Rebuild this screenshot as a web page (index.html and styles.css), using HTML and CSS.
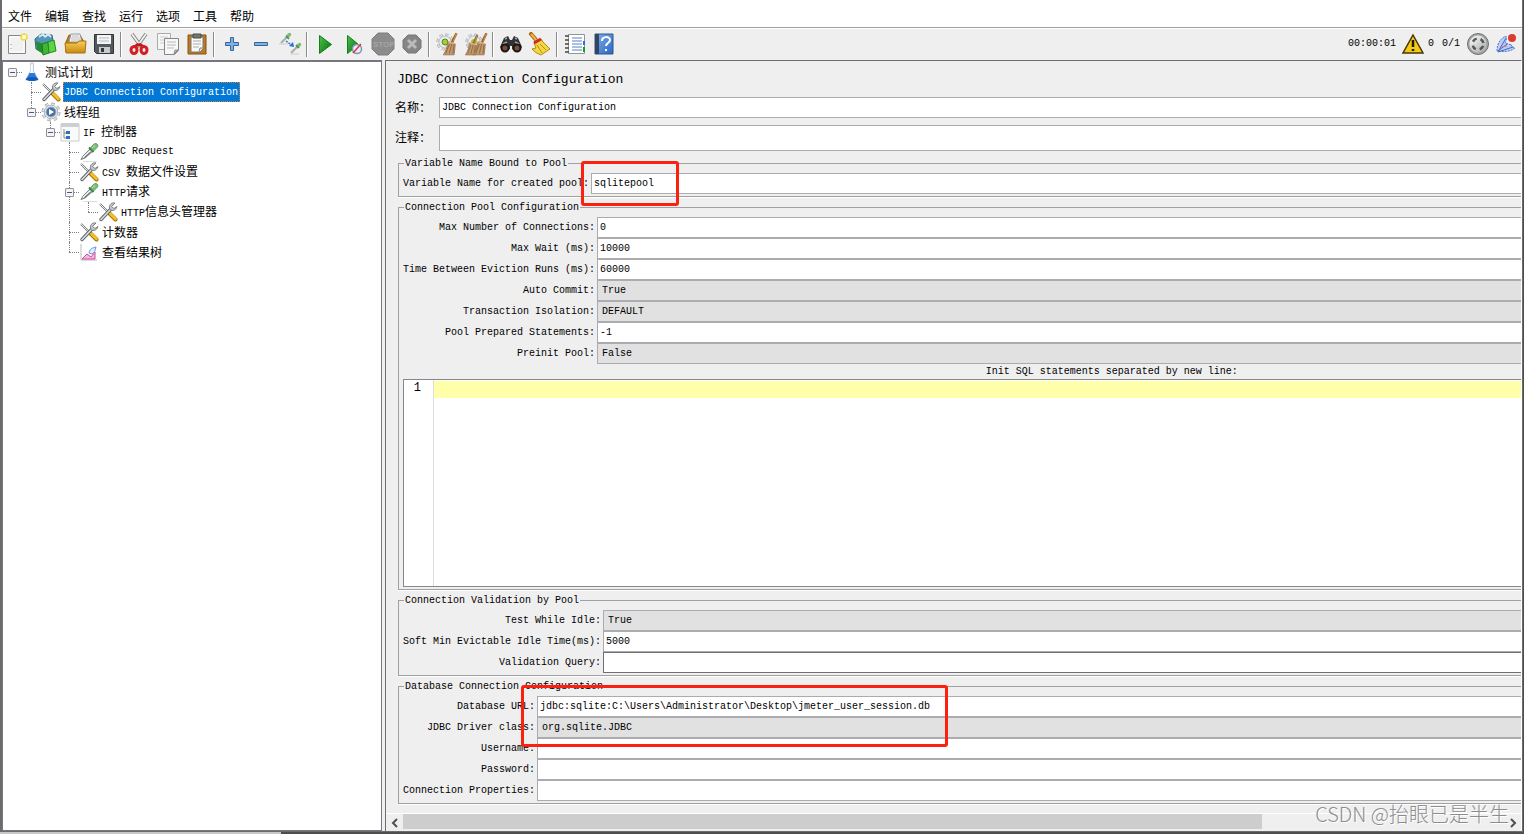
FILE: index.html
```html
<!DOCTYPE html>
<html lang="zh-CN">
<head>
<meta charset="utf-8">
<title>JDBC Connection Configuration</title>
<link rel="stylesheet" href="styles.css">
</head>
<body>
<svg class="defs" aria-hidden="true">
  <defs>
    <linearGradient id="gold" x1="0" y1="0" x2="0" y2="1"><stop offset="0" stop-color="#f7cf55"/><stop offset="1" stop-color="#c98a14"/></linearGradient>
    <linearGradient id="green" x1="0" y1="0" x2="1" y2="1"><stop offset="0" stop-color="#4fc04f"/><stop offset="1" stop-color="#067006"/></linearGradient>
    <linearGradient id="silver" x1="0" y1="0" x2="1" y2="1"><stop offset="0" stop-color="#ffffff"/><stop offset="1" stop-color="#a2a6a8"/></linearGradient>
    <linearGradient id="blue" x1="0" y1="0" x2="1" y2="1"><stop offset="0" stop-color="#7fb0ee"/><stop offset="1" stop-color="#2c66bd"/></linearGradient>
    <symbol id="tools" viewBox="0 0 20 20">
      <path d="M2 2 12 12" stroke="#6d7173" stroke-width="2"/><path d="M2 2 11 11" stroke="#e9ecec" stroke-width="1"/>
      <path d="M11.500 11.500 17.500 17.500" stroke="#a87500" stroke-width="4" stroke-linecap="round"/><path d="M12 11.500 17.500 17" stroke="#f5c02a" stroke-width="2.500" stroke-linecap="round"/>
      <path d="M3 17.500 13 7" stroke="#5d6163" stroke-width="3.400" stroke-linecap="round"/><path d="M3 17.500 13 7" stroke="#d9dddd" stroke-width="1.700" stroke-linecap="round"/>
      <path d="M17 1C13 0 10 4 12 7.500c2 2 6 1 7-3l-3 2-2.500-2Z" fill="#c3c7c8" stroke="#686c6e" stroke-width=".8"/>
    </symbol>
    <symbol id="dropper" viewBox="0 0 20 20">
      <path d="M2 17.500 4 14l7-7 2.500 2.500L6 16Z" fill="#c4cacb" stroke="#6b7173" stroke-width=".9"/><path d="m4 15.500 7.500-7" stroke="#f5f8f8" stroke-width="1.200"/><path d="m5.500 15.500 6-5.500" stroke="#4b5153" stroke-width=".9"/>
      <path d="m10 5.500 4.500 4.500" stroke="#3b7d46" stroke-width="2"/><path d="m11.500 6 3-3.500c2.500-2.500 6 .5 3.500 3L14.500 9Z" fill="#7fc077" stroke="#4a9150" stroke-width=".9"/><path d="m13.500 5.500 2.500-2" stroke="#c3e6bd"/>
      <path d="M4 19.500h14" stroke="#ddd"/>
    </symbol>
    <symbol id="cog" viewBox="0 0 20 20">
      <circle cx="10" cy="10" r="8" fill="none" stroke="#989da1" stroke-width="3" stroke-dasharray="3.400 2.880"/>
      <circle cx="10" cy="10" r="8" fill="none" stroke="#e3e6e8" stroke-width="1.600" stroke-dasharray="2.800 3.480" stroke-dashoffset="-.3"/>
      <circle cx="10" cy="10" r="6.800" fill="#e8ebed" stroke="#b4b9bc"/>
    </symbol>
    <symbol id="brush" viewBox="0 0 14 20">
      <path d="M12 1 8 9" stroke="#9a6328" stroke-width="2"/><path d="m5 8 6 2-1 9H1C4 15 4 11 5 8Z" fill="#c39a6e" stroke="#9b7148" stroke-width=".7"/><path d="M6 10 3 18M8 10 6 18M10 10 9 18" stroke="#8e6642" stroke-width=".8"/><path d="m5 8 6 2" stroke="#e1bd8c"/><path d="M12 1 9 9" stroke="#c18a4d" stroke-width="1"/>
    </symbol>
  </defs>
</svg>
<div class="window">
  <nav class="menubar">
    <button>文件</button><button>编辑</button><button>查找</button><button>运行</button><button>选项</button><button>工具</button><button>帮助</button>
  </nav>
  <div class="toolbar">
    <button aria-label="New"><svg viewBox="0 0 24 24"><path d="M3.500 3.500h17v18h-17Z" fill="#f0f1f0" stroke="#858885"/><path d="M5 5h14v15H5Z" fill="none" stroke="#fff"/><circle cx="19" cy="5" r="3" fill="#fffbd0" stroke="#ead94c" stroke-width="1.500"/><path d="M6 12v1M6 16v1" stroke="#999"/></svg></button>
    <button aria-label="Templates"><svg viewBox="0 0 24 24"><path d="m1 7 6-5 11 1 2 12-12 5-6-3Z" fill="#5297ba" stroke="#28688b"/><path d="m5 5 4-3 2 3M11 5l3-3 3 3" fill="none" stroke="#d5e8ef" stroke-width="2"/><path d="m2 9 7 3v10l-6-4Z" fill="#238e2b"/><path d="m8 12 6-2 1 11-6 2Z" fill="#42b633" stroke="#187d1c"/><path d="m14 10 6-2 2 11-7 2Z" fill="#5ed343" stroke="#238a20"/></svg></button>
    <button aria-label="Open"><svg viewBox="0 0 24 24"><path d="M3 10 6 3h11l4 7v10H3Z" fill="#bc7d17" stroke="#93600f"/><path d="m6 10 2-8h9l2 8Z" fill="#fafafa" stroke="#999"/><path d="M9 4h7M8 6h9M8 8h10" stroke="#bbb"/><path d="M2 11h12l2-2h7l-1 12H3Z" fill="url(#gold)" stroke="#a97110"/></svg></button>
    <button aria-label="Save"><svg viewBox="0 0 24 24"><path d="M2.500 2.500h19v19h-17l-2-2Z" fill="#535a5d" stroke="#303538"/><path d="M5 3h14v9H5Z" fill="#f2f4f5"/><path d="M7 6h10M7 9h10" stroke="#b7bcc0"/><path d="M7 15h11v6H7Z" fill="#c6cacc"/><path d="M9 16h3v4H9Z" fill="#34383a"/></svg></button>
    <span class="separator"></span>
    <button aria-label="Cut"><svg viewBox="0 0 24 24"><path d="M5 2 15 16M19 2 9 16" stroke="#777" stroke-width="3.500"/><path d="M5 2 15 16M19 2 9 16" stroke="#eee" stroke-width="2"/><path d="m12 12-5 3M12 12l5 3" stroke="#bd1616" stroke-width="3"/><ellipse cx="7" cy="18" rx="3" ry="3.500" fill="none" stroke="#d31d23" stroke-width="3"/><ellipse cx="17" cy="18" rx="3" ry="3.500" fill="none" stroke="#d31d23" stroke-width="3"/></svg></button>
    <button aria-label="Copy"><svg viewBox="0 0 24 24"><path d="M1.500 1.500h13v16h-13Z" fill="#f6f6f6" stroke="#aaa"/><path d="M4 5h8M4 8h8M4 11h8" stroke="#ccc"/><path d="M8.500 6.500h14v12l-4 4h-10Z" fill="#f8f8f8" stroke="#858585"/><path d="M11 10h9M11 13h9M11 16h7" stroke="#b7b7b7"/><path d="m18 22 1-4h3Z" fill="#ccc" stroke="#888"/></svg></button>
    <button aria-label="Paste"><svg viewBox="0 0 24 24"><path d="M3 3h18v19H3Z" fill="#bd7a20" stroke="#875211"/><path d="M6 5h12v12l-3 3H6Z" fill="#fafafa" stroke="#777"/><path d="M8 2h8v4H8Z" fill="#73786f" stroke="#4b4e49"/><path d="M8 9h8M8 12h8M8 15h6" stroke="#aaa"/><path d="m14 20 1-4h3" fill="#ddd" stroke="#888"/></svg></button>
    <span class="separator"></span>
    <button aria-label="Expand"><svg viewBox="0 0 24 24"><path d="M10.500 5.500h3v5h5v3h-5v5h-3v-5h-5v-3h5Z" fill="#82b0df" stroke="#3566a2"/></svg></button>
    <button aria-label="Collapse"><svg viewBox="0 0 24 24"><path d="M5.500 10.500h13v3h-13Z" fill="#82b0df" stroke="#3566a2"/></svg></button>
    <button aria-label="Toggle"><svg viewBox="0 0 24 24"><path d="m3 11 6-6M13 21l6-6" stroke="#a9afab" stroke-width="2"/><path d="m9.500 4.500 2-2M19.500 14.500l2-2" stroke="#7fb97a" stroke-width="3.500" stroke-linecap="round"/><path d="m8 4 3 3M18 13l3 3" stroke="#4d8a52" stroke-width="1.500"/><path d="m8 9 7 5" stroke="#3872d0" stroke-width="1.500" stroke-dasharray="2 1"/><path d="m15 10 1 5-5-1Z" fill="#246dde"/><path d="M1 12h9M13 22h8" stroke="#ccc"/></svg></button>
    <span class="separator"></span>
    <button aria-label="Start"><svg viewBox="0 0 24 24"><path d="M6.500 3.500v18l12-9Z" fill="url(#green)" stroke="#118019"/></svg></button>
    <button aria-label="Start no pauses"><svg viewBox="0 0 24 24"><path d="M5.500 3.500v18l11-9Z" fill="url(#green)" stroke="#118019"/><circle cx="15" cy="17" r="4.500" fill="#e8edf5" stroke="#7896ba" stroke-width="1.500"/><path d="m11 21 8-9" stroke="#df3434" stroke-width="1.500"/></svg></button>
    <button aria-label="Stop"><svg viewBox="0 0 24 24"><path d="M7 1h10l6 6v10l-6 6H7l-6-6V7Z" fill="#8c8c8c" stroke="#7f7f7f"/><text x="2" y="15" class="stop-text">STOP</text></svg></button>
    <button aria-label="Shutdown"><svg viewBox="0 0 24 24"><path d="M8 3h8l5 5v8l-5 5H8l-5-5V8Z" fill="#858585" stroke="#777"/><path d="m8 8 8 8M16 8l-8 8" stroke="#bbb" stroke-width="3"/></svg></button>
    <span class="separator"></span>
    <button aria-label="Clear"><svg viewBox="0 0 24 24"><use href="#cog" x="1" y="1" width="18" height="18"/><circle cx="10" cy="10" r="3" fill="#9ccf35" stroke="#5b8d1d"/><use href="#brush" x="7" y="0" width="17" height="24"/></svg></button>
    <button aria-label="Clear all"><svg viewBox="0 0 24 24"><use href="#cog" x="1" y="1" width="18" height="18"/><circle cx="10" cy="10" r="3" fill="#9ccf35"/><use href="#brush" x="0" y="2" width="16" height="22"/><use href="#brush" x="8" y="0" width="17" height="24"/></svg></button>
    <span class="separator"></span>
    <button aria-label="Search"><svg viewBox="0 0 24 24"><path d="m5 6 4-2 2 4h2l2-4 4 2 4 9-4 5-6-3v-3h-2v3l-6 3-4-5Z" fill="#303234"/><path d="m6 7 2-1M16 6l2 1M4 12l4-2M16 10l4 2" stroke="#a3a5a8" stroke-width="1.500"/><circle cx="6" cy="16" r="3.500" fill="#814a2d" stroke="#171717" stroke-width="2"/><circle cx="18" cy="16" r="3.500" fill="#814a2d" stroke="#171717" stroke-width="2"/></svg></button>
    <button aria-label="Reset search"><svg viewBox="0 0 24 24"><path d="m3 2 6 7" stroke="#a86509" stroke-width="4" stroke-linecap="round"/><path d="m3 2 6 7" stroke="#efb548" stroke-width="2"/><path d="m6 11 7-4 2 3 7 7-9 6Q7 21 4 17l4-1Z" fill="#f3d643" stroke="#b48b0c"/><path d="m6 11 7-4" stroke="#d42a21" stroke-width="3"/><path d="m9 13 5 8M12 12l6 6" stroke="#b89110"/></svg></button>
    <span class="separator"></span>
    <button aria-label="Function helper"><svg viewBox="0 0 24 24"><path d="M5.500 2.500h16v19h-16Z" fill="#fff" stroke="#91969b"/><path d="M9 6h10M9 9h10M9 12h10M9 15h10M9 18h10" stroke="#5a7fc4"/><path d="M2 4h4M2 8h4M2 12h4M2 16h4M2 20h4" stroke="#444" stroke-width="1.500"/><path d="M20 9h2v4h-2Z" fill="#2471d8"/><path d="M20 15h2v5h-2Z" fill="#16992f"/></svg></button>
    <button aria-label="Help"><svg viewBox="0 0 24 24"><path d="M3 2h18v20H3Z" fill="url(#blue)" stroke="#2c5694"/><path d="M3 2h4v20H3Z" fill="#33475c"/><path d="M10 9c0-5 8-5 8-1 0 3-4 3-4 6M14 17v2" fill="none" stroke="#fff" stroke-width="2"/></svg></button>
    <div class="status">
      <span class="clock">00:00:01</span>
      <button aria-label="Warnings"><svg viewBox="0 0 24 24"><path d="M12 3 22 21H2Z" fill="#f4c911" stroke="#43370b" stroke-width="1.500"/><path d="M12 8v7M12 17v2" stroke="#211b05" stroke-width="2.500"/></svg></button>
      <span>0</span><span class="threads">0/1</span>
      <svg class="target" viewBox="0 0 24 24"><circle cx="12" cy="12" r="10.500" fill="#a6a6a6" stroke="#707070"/><circle cx="12" cy="12" r="8.500" fill="url(#silver)"/><circle cx="12" cy="12" r="5.500" fill="none" stroke="#555" stroke-width="2.500" stroke-dasharray="4.600 4.040" stroke-dashoffset="-2"/></svg>
      <svg class="plume" viewBox="0 0 24 24"><path d="M3 19C3 11 7 6 12 4c1 3 0 5-1 7l7 2-1 1 4 2c-5 4-12 4-18 3Z" fill="#b9cdf7" stroke="#5379cf" stroke-dasharray="2 1"/><path d="M4 20 12 6M4 20l15-5M4 19l9-7" stroke="#456bbb"/><path d="m7 15 6-1" stroke="#d76d95"/><circle cx="18" cy="6" r="4" fill="#dc3b31"/></svg>
    </div>
  </div>
  <div class="workspace">
    <aside class="tree">
      <ul class="root">
        <li>
          <div class="node"><button class="expander" aria-label="Collapse"></button><svg viewBox="0 0 20 20"><path d="M8.500 1h3v8l5 9h-13l5-9Z" fill="#edf4fa" stroke="#c0ccd5"/><path d="M7.500 11h5l3.500 7H4Z" fill="#267bdf"/><ellipse cx="10" cy="17" rx="6" ry="2" fill="#1359b9"/><path d="M9.500 3v8" stroke="#fff" stroke-width="1.500"/></svg><span>测试计划</span></div>
          <ul>
            <li><div class="node leaf"><svg><use href="#tools"/></svg><span class="selected latin">JDBC Connection Configuration</span></div></li>
            <li>
              <div class="node"><button class="expander" aria-label="Collapse"></button><svg viewBox="0 0 20 20"><use href="#cog"/><circle cx="10" cy="10" r="5" fill="#4872a8" stroke="#9cb1cd"/><path d="m8 7 5 3-5 3Z" fill="#fff"/></svg><span>线程组</span></div>
              <ul>
                <li>
                  <div class="node"><button class="expander" aria-label="Collapse"></button><svg viewBox="0 0 20 20"><path d="M1 2h18v17H1Z" fill="#fafafa" stroke="#ccc"/><path d="M1 1h18v4H1Z" fill="#ccd0d3"/><path d="M4 7v9h3M4 11h3" fill="none" stroke="#888"/><path d="M6 9h4v3H6ZM6 14h4v3H6Z" fill="#2774c7"/></svg><span><span class="latin">IF </span>控制器</span></div>
                  <ul>
                    <li><div class="node leaf"><svg><use href="#dropper"/></svg><span class="latin">JDBC Request</span></div></li>
                    <li><div class="node leaf"><svg><use href="#tools"/></svg><span><span class="latin">CSV </span>数据文件设置</span></div></li>
                    <li>
                      <div class="node"><button class="expander" aria-label="Collapse"></button><svg><use href="#dropper"/></svg><span><span class="latin">HTTP</span>请求</span></div>
                      <ul><li><div class="node leaf"><svg><use href="#tools"/></svg><span><span class="latin">HTTP</span>信息头管理器</span></div></li></ul>
                    </li>
                    <li><div class="node leaf"><svg><use href="#tools"/></svg><span>计数器</span></div></li>
                    <li><div class="node leaf"><svg viewBox="0 0 20 20"><path d="M2 2v16h16" fill="none" stroke="#bbb"/><path d="m3 17 5-5 4 3 4-5v7Z" fill="#f5b5dc" stroke="#cf4c9b"/><path d="M10 11c1-5 4-5 7-6-1 3-1 6-4 7Z" fill="#e3edff" stroke="#6d92dc"/></svg><span>查看结果树</span></div></li>
                  </ul>
                </li>
              </ul>
            </li>
          </ul>
        </li>
      </ul>
    </aside>
    <main class="editor-pane">
      <div class="scroll-view">
        <form class="form">
          <h1>JDBC Connection Configuration</h1>
          <div class="meta"><label for="name">名称：</label><input id="name" value="JDBC Connection Configuration"></div>
          <div class="meta comment"><label for="comment">注释：</label><input id="comment"></div>

          <fieldset>
            <legend>Variable Name Bound to Pool</legend>
            <div class="fields">
              <label for="pool">Variable Name for created pool:</label><input id="pool" value="sqlitepool">
            </div>
            <span class="mark mark-pool"></span>
          </fieldset>

          <fieldset>
            <legend>Connection Pool Configuration</legend>
            <div class="fields">
              <label for="max">Max Number of Connections:</label><input id="max" value="0">
              <label for="wait">Max Wait (ms):</label><input id="wait" value="10000">
              <label for="evict">Time Between Eviction Runs (ms):</label><input id="evict" value="60000">
              <label for="auto">Auto Commit:</label><select id="auto"><option>True</option></select>
              <label for="iso">Transaction Isolation:</label><select id="iso"><option>DEFAULT</option></select>
              <label for="prep">Pool Prepared Statements:</label><input id="prep" value="-1">
              <label for="preinit">Preinit Pool:</label><select id="preinit"><option>False</option></select>
            </div>
            <label class="sql-label" for="sql">Init SQL statements separated by new line:</label>
            <div class="code"><span class="gutter">1</span><textarea id="sql" spellcheck="false"></textarea></div>
          </fieldset>

          <fieldset>
            <legend>Connection Validation by Pool</legend>
            <div class="fields">
              <label for="idle">Test While Idle:</label><select id="idle"><option>True</option></select>
              <label for="soft">Soft Min Evictable Idle Time(ms):</label><input id="soft" value="5000">
              <label for="query">Validation Query:</label><input id="query" class="dark">
            </div>
          </fieldset>

          <fieldset>
            <legend>Database Connection Configuration</legend>
            <div class="fields">
              <label for="url">Database URL:</label><input id="url" value="jdbc:sqlite:C:\Users\Administrator\Desktop\jmeter_user_session.db">
              <label for="driver">JDBC Driver class:</label><select id="driver"><option>org.sqlite.JDBC</option></select>
              <label for="user">Username:</label><input id="user">
              <label for="pass">Password:</label><input id="pass" type="password">
              <label for="props">Connection Properties:</label><input id="props">
            </div>
            <span class="mark mark-db"></span>
          </fieldset>
        </form>
      </div>
      <div class="scrollbar">
        <button aria-label="Scroll left"><svg viewBox="0 0 10 10"><path d="M7 1 3 5l4 4" fill="none" stroke="#505050" stroke-width="2"/></svg></button>
        <div class="track"><div class="thumb"></div></div>
        <button aria-label="Scroll right"><svg viewBox="0 0 10 10"><path d="m3 1 4 4-4 4" fill="none" stroke="#505050" stroke-width="2"/></svg></button>
      </div>
    </main>
  </div>
</div>
<div class="watermark">CSDN @抬眼已是半生</div>
</body>
</html>
```
FILE: styles.css
```css
* { box-sizing: border-box; }
body {
  margin: 0;
  height: 100vh;
  padding: 0 1px 2px 0;
  overflow: hidden;
  background: linear-gradient(90deg, #c8c8c8 281px, #4e4e50 281px);
  font: 12px/20px "Liberation Mono", "Noto Sans CJK SC", monospace;
  color: #000;
}
button { margin: 0; padding: 0; border: 0; background: none; color: inherit; font: inherit; }
svg { display: block; flex: none; fill: none; }
.defs { position: absolute; width: 0; height: 0; }
.window {
  display: flex;
  flex-direction: column;
  height: 100%;
  border: solid #6c6c6e;
  border-width: 0 1px 1px 2px;
  background: #efefef;
}
.menubar {
  display: flex;
  gap: 13px;
  height: 28px;
  padding: 5px 6px 0;
  border-bottom: 1px solid #a0a0a0;
  background: #fff;
  font-family: "Noto Sans CJK SC", sans-serif;
}
.toolbar {
  display: flex;
  align-items: center;
  height: 32px;
  padding-bottom: 1px;
  border-top: 1px solid #fff;
}
.toolbar button { display: flex; justify-content: center; width: 29px; }
.toolbar svg { width: 24px; height: 24px; }
.separator { width: 2px; height: 25px; margin: 0 2px; border-left: 1px solid #8a8a8a; border-right: 1px solid #fff; }
.stop-text { font: bold 8px "Liberation Sans", sans-serif; fill: #a5a5a5; }
.status { display: flex; align-items: center; margin-left: auto; padding-right: 4px; font-size: 10px; }
.clock { margin-right: 3px; }
.threads { margin: 0 6px 0 8px; }
.status .plume { margin-left: 4px; }

.workspace { display: flex; flex: 1; min-height: 0; }
.tree {
  flex: 0 0 380px;
  border: 1px solid #77777f;
  border-top: 2px solid #77777f;
  background: #fff;
  font-family: "Noto Sans CJK SC", sans-serif;
}
.tree ul { margin: 0; padding: 0 0 0 19px; list-style: none; }
.tree .root { padding-left: 5px; }
.tree li { position: relative; }
.node { position: relative; display: flex; align-items: center; height: 20px; }
.node svg { width: 20px; height: 20px; margin-right: 2px; }
.node.leaf { padding-left: 14px; }
.node > span { padding: 0 1px; white-space: pre; }
.expander {
  position: relative;
  z-index: 1;
  width: 9px;
  height: 9px;
  margin-right: 5px;
  border: 1px solid #919191;
  border-radius: 1px;
  background: linear-gradient(#3f5a9c, #3f5a9c) center / 5px 1px no-repeat #f4f4f4;
}
.node::before {
  content: "";
  position: absolute;
  left: 4px;
  top: 10px;
  width: 10px;
  border-top: 1px dotted #808080;
}
.tree ul ul > li::before {
  content: "";
  position: absolute;
  left: 4px;
  top: 0;
  bottom: 0;
  border-left: 1px dotted #808080;
}
.tree ul ul > li:last-child::before { bottom: auto; height: 10px; }
.latin { font-family: "Liberation Mono", monospace; font-size: 10px; }
.node > .latin { line-height: 22px; }
.node > .selected { height: 20px; padding: 0 2px 0 1px; outline: 1px dotted #d9822b; outline-offset: -1px; background: #0078d7; color: #fff; }

.editor-pane {
  display: flex;
  flex: 1;
  flex-direction: column;
  min-width: 0;
  margin-left: 3px;
  border-top: 1px solid #6e6e6e;
  border-left: 1px solid #6e6e6e;
  border-right: 1px solid #fff;
}
.scroll-view { flex: 1; min-height: 0; overflow: hidden; }
.form { width: 127%; padding: 9px 2px 0 9px; font-size: 10px; line-height: 12px; }
h1 { margin: 0 0 7px 2px; font-size: 13px; font-weight: normal; line-height: 20px; }
.meta { display: flex; align-items: center; margin-bottom: 7px; }
.meta label { flex: 0 0 44px; padding-top: 2px; font-size: 12px; white-space: nowrap; }
.meta input { flex: 1; }
.comment { margin-bottom: 6px; }
.comment input { height: 26px; }
input, select {
  appearance: none;
  min-width: 0;
  height: 21px;
  margin: 0;
  padding: 0 2px;
  border: 1px solid #ababb0;
  border-radius: 0;
  outline: 0;
  background: #fff;
  color: #000;
  font: inherit;
}
select { padding: 0 4px; background: #e1e1e1; }
input.dark { border-color: #707074; }
fieldset {
  position: relative;
  min-width: 0;
  margin: 0 0 4px 3px;
  padding: 4px 4px 2px;
  border: 1px solid #a0a0a0;
  box-shadow: 0 1px #fff;
}
legend { height: 12px; margin-left: 1px; padding: 0 1px; line-height: 14px; }
.fields { display: grid; grid-template-columns: auto 1fr; column-gap: 2px; align-items: center; }
.fields label { text-align: right; white-space: nowrap; }
.sql-label { display: block; height: 15px; padding-top: 2px; text-align: center; }
.code { display: flex; height: 208px; border: 1px solid #828790; background: #fff; }
.gutter { width: 30px; padding: 0 12px 0 0; border-right: 1px solid #ddd; font-size: 12px; line-height: 17px; text-align: right; }
.code textarea {
  flex: 1;
  margin: 0;
  padding: 2px;
  border: 0;
  outline: 0;
  resize: none;
  background: linear-gradient(#ffffaa, #ffffaa) 0 1px / 100% 17px no-repeat;
  font: inherit;
}
.mark { position: absolute; border: 3px solid #fb2010; border-radius: 3px; pointer-events: none; }
.mark-pool { left: 182px; top: -8px; width: 98px; height: 45px; }
.mark-db { left: 122px; top: -7px; width: 427px; height: 62px; }
.scrollbar { display: flex; height: 18px; border-top: 1px solid #fff; }
.scrollbar button { display: grid; place-items: center; width: 17px; }
.scrollbar svg { width: 10px; height: 10px; }
.track { flex: 1; }
.thumb { width: 78%; height: 15px; background: #cdcdcd; }
.watermark {
  position: absolute;
  right: 15px;
  bottom: 6px;
  color: #8d8d8d;
  font: 300 20px/28px "Noto Sans CJK SC", sans-serif;
  text-shadow: 1px 1px #fff;
}
```
